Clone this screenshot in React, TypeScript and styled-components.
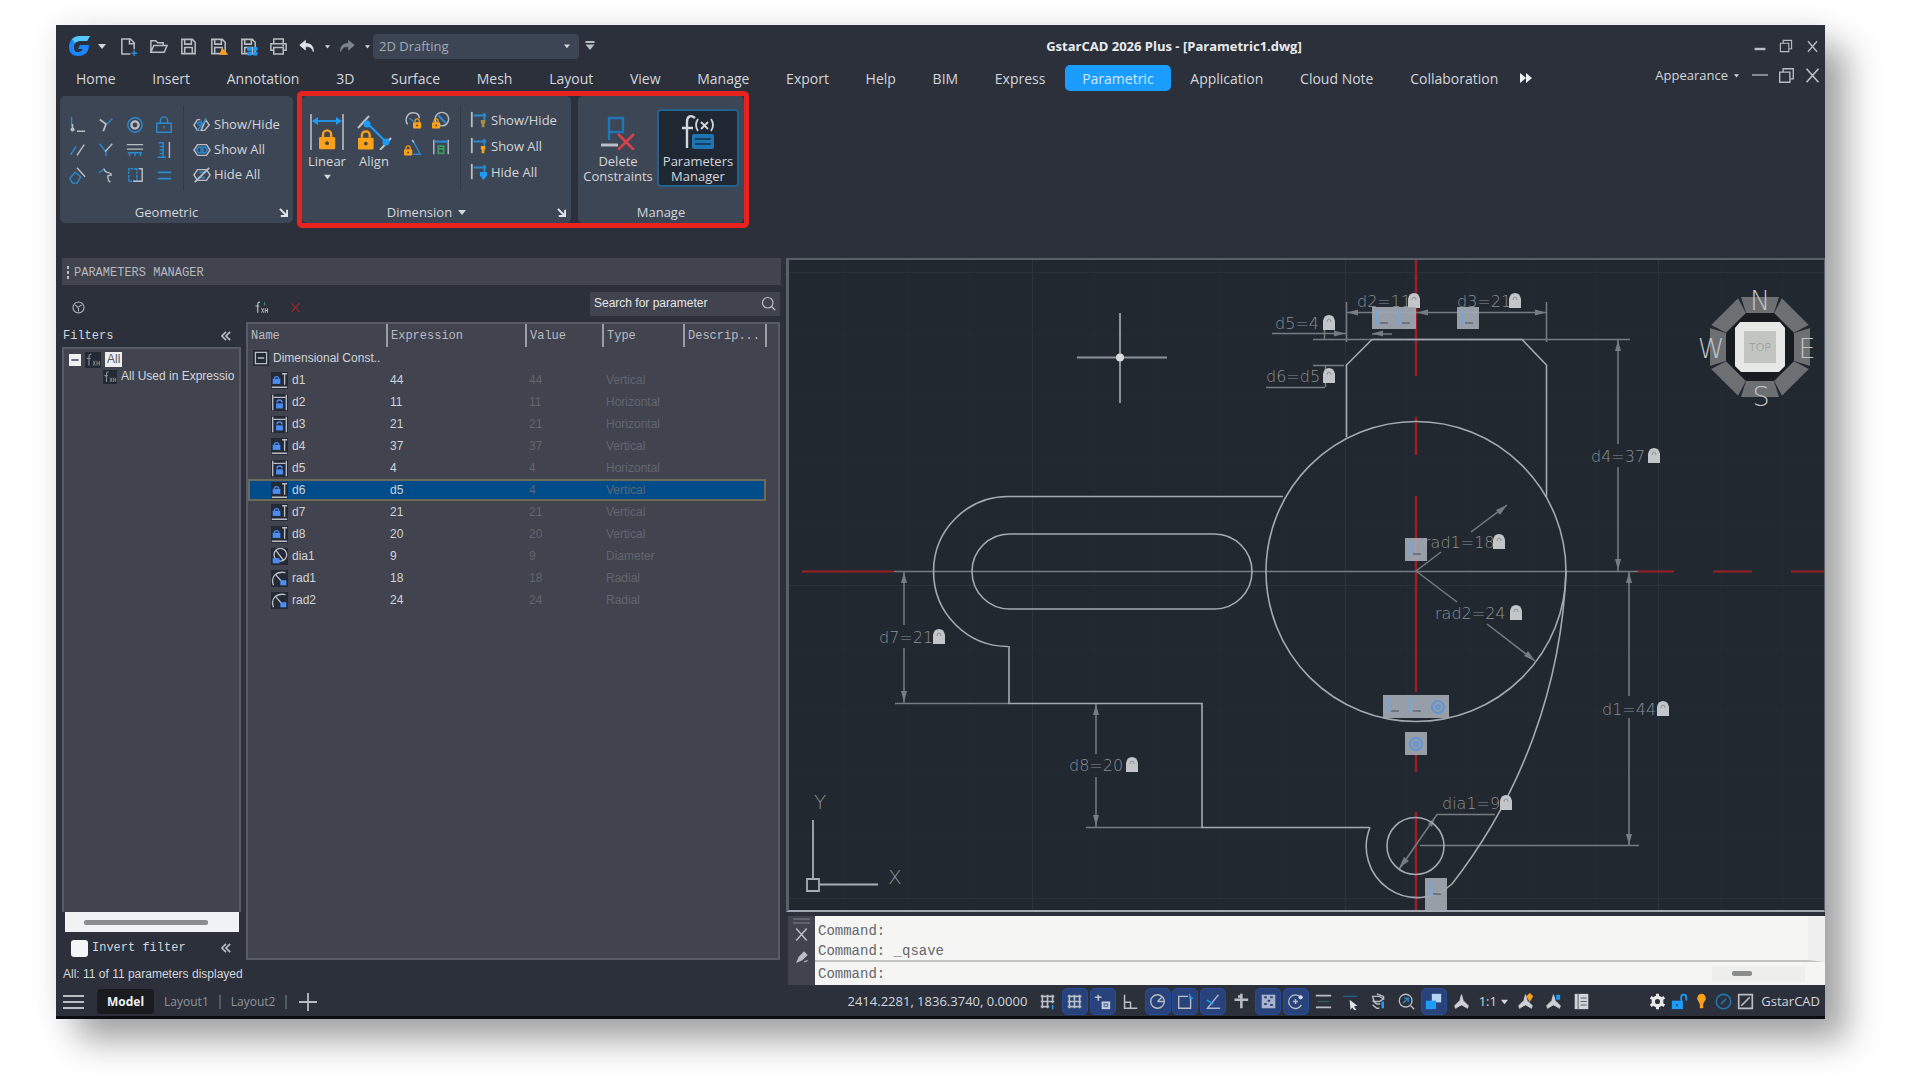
import React from 'react';
import styled, { createGlobalStyle, css } from 'styled-components';

const UI = '"Open Sans", "Noto Sans", sans-serif';
const GRID = '"Liberation Sans", Arial, sans-serif';
const MONO = '"Liberation Mono", "Courier New", monospace';

const LINE = '#b9bdc4';
const BLUE = '#2a8ad0';
const BRIGHT = '#1d9bf5';
const ORANGE = '#f9a11b';
const RED = '#d8404a';

const GlobalStyle = createGlobalStyle`
  * { box-sizing: border-box; }
  body { margin: 0; background: #fff; font-family: ${UI}; }
  button, input, select { font: inherit; color: inherit; margin: 0; }
  button { background: none; border: 0; padding: 0; }
  svg { display: block; flex: none; }
`;

const Page = styled.div`
  min-height: 100vh;
  padding: 25px 95px 61px 56px;
`;

const Window = styled.div`
  display: flex;
  flex-direction: column;
  height: calc(100vh - 86px);
  min-height: 760px;
  background: #2b303b;
  border-bottom: 3px solid #0b0d11;
  color: #d3d6db;
  font-size: 13px;
  line-height: 15px;
  box-shadow: 22px 22px 32px rgba(0, 0, 0, 0.34), 0 0 30px rgba(0, 0, 0, 0.08);
`;

const TitleBar = styled.header`
  display: flex;
  align-items: center;
  height: 40px;
  padding: 2px 0 0 12px;
`;

const IconButton = styled.button<{ $w?: number; $h?: number }>`
  display: flex;
  align-items: center;
  justify-content: center;
  width: ${p => p.$w ?? 30}px;
  height: ${p => p.$h ?? 25}px;
  flex: none;
`;

const Workspace = styled.div`
  display: grid;
  width: 206px;
  height: 25px;
`;

const WorkspaceSelect = styled.select`
  grid-area: 1 / 1;
  appearance: none;
  border: 0;
  border-radius: 4px;
  background: #3c4554;
  color: #a4abb5;
  padding: 0 6px;
  font-size: 13px;
`;

const SelectArrow = styled.span`
  grid-area: 1 / 1;
  justify-self: end;
  align-self: center;
  padding-right: 9px;
  pointer-events: none;
`;

const WindowTitle = styled.h1`
  flex: 1;
  margin: 0;
  text-align: center;
  font-size: 13px;
  line-height: 16px;
  font-weight: 700;
  color: #e9ebee;
`;

const TabRow = styled.nav`
  display: flex;
  justify-content: space-between;
  height: 26px;
  padding-left: 3px;
`;

const TabStrip = styled.div`
  display: flex;
  flex: 0 1 1475px;
  justify-content: space-between;
`;

const Tab = styled.button<{ $active?: boolean }>`
  height: 26px;
  padding: 2px 17px 0;
  border-radius: 5px;
  font-size: 14px;
  line-height: 20px;
  white-space: nowrap;
  ${p => p.$active && css`background: #1b9cff; color: #cfe9ff;`}
`;

const TabTools = styled.div`
  display: flex;
  align-items: center;
  height: 20px;
`;

const Appearance = styled.button`
  display: flex;
  align-items: center;
  gap: 6px;
  padding-right: 8px;
`;

const Ribbon = styled.div`
  display: flex;
  align-items: center;
  gap: 4px;
  padding: 0 4px 30px;
`;

const Highlight = styled.div`
  display: flex;
  gap: 7px;
  border: 5px solid #e8231f;
  border-radius: 5px;
`;

const Panel = styled.section<{ $w: number }>`
  display: flex;
  flex-direction: column;
  width: ${p => p.$w}px;
  height: 127px;
  border-radius: 5px;
  background: #3d4655;
`;

const PanelBody = styled.div<{ $left: number }>`
  display: flex;
  flex: 1;
  padding-left: ${p => p.$left}px;
`;

const PanelFooter = styled.footer`
  display: flex;
  align-items: center;
  height: 22px;
`;

const FooterTitle = styled.span`
  flex: 1;
  display: flex;
  align-items: center;
  justify-content: center;
  gap: 6px;
`;

const ToolGrid = styled.div<{ $cols: number; $cw: number; $rh: number; $top: number }>`
  display: grid;
  grid-template-columns: repeat(${p => p.$cols}, ${p => p.$cw}px);
  grid-auto-rows: ${p => p.$rh}px;
  padding-top: ${p => p.$top}px;
`;

const PanelRule = styled.i`
  width: 1px;
  height: 84px;
  margin: 10px 9px 0 5px;
  background: #313a47;
`;

const ToolList = styled.div<{ $rh: number; $top: number }>`
  display: grid;
  grid-auto-rows: ${p => p.$rh}px;
  padding-top: ${p => p.$top}px;
`;

const ListTool = styled.button`
  display: flex;
  align-items: center;
  gap: 3px;
  white-space: nowrap;
`;

const BigTool = styled.button<{ $w: number; $active?: boolean }>`
  display: flex;
  flex-direction: column;
  align-items: center;
  gap: 4px;
  width: ${p => p.$w}px;
  height: 78px;
  margin-top: 13px;
  padding-top: 3px;
  border-radius: 4px;
  border: 2px solid transparent;
  ${p => p.$active && css`background: #1f2733; border-color: #23618f;`}
`;

const BigLabel = styled.span`
  white-space: pre-line;
  text-align: center;
`;

const Main = styled.main`
  display: grid;
  grid-template-columns: 730px minmax(0, 1fr);
  flex: 1;
  min-height: 0;
`;

const Dock = styled.aside`
  display: flex;
  flex-direction: column;
  padding: 0 5px 0 6px;
  font-family: ${GRID};
  font-size: 12px;
  min-height: 0;
`;

const DockTitle = styled.h2`
  display: flex;
  align-items: center;
  gap: 3px;
  height: 27px;
  margin: 0;
  padding: 2px 0 0 5px;
  background: #41434e;
  font: 400 12px/16px ${MONO};
  color: #b6b9bf;
`;

const DockTools = styled.div`
  display: flex;
  align-items: center;
  height: 37px;
  padding: 8px 0 0 1px;
`;

const ToolSpacer = styled.span<{ $w: number }>`
  width: ${p => p.$w}px;
`;

const Search = styled.label`
  display: flex;
  align-items: center;
  width: 190px;
  height: 24px;
  margin: 0 1px 8px auto;
  padding: 0 4px;
  background: #41434e;
  color: #d3d6db;
`;

const SearchInput = styled.input`
  flex: 1;
  min-width: 0;
  padding: 0;
  border: 0;
  background: none;
  font-weight: 400;
  &::placeholder { color: #e4e6e9; opacity: 1; }
`;

const DockBody = styled.div`
  display: grid;
  grid-template-columns: 179px minmax(0, 1fr);
  gap: 5px;
  flex: 1;
  min-height: 0;
  padding-right: 1px;
`;

const FilterColumn = styled.div`
  display: flex;
  flex-direction: column;
`;

const FilterHead = styled.div`
  display: flex;
  align-items: center;
  justify-content: space-between;
  height: 25px;
  padding: 2px 8px 0 1px;
  font: 400 12px/16px ${MONO};
`;

const Tree = styled.ul`
  flex: 1;
  margin: 0;
  padding: 2px 0 0;
  list-style: none;
  background: #41434e;
  border: 2px solid #575b68;
  border-bottom: 0;
  overflow: hidden;
`;

const TreeItem = styled.li<{ $depth: number }>`
  display: flex;
  align-items: center;
  gap: 4px;
  height: 17px;
  padding-left: ${p => 5 + p.$depth * 34}px;
  white-space: nowrap;
`;

const Selected = styled.span`
  padding: 0 2px;
  background: #eceef0;
  color: #555962;
`;

const TreeScroll = styled.div`
  height: 20px;
  margin: 0 2px 0 3px;
  padding: 8px 31px 0 19px;
  background: #f0f2f3;
`;

const ScrollThumb = styled.i<{ $w?: string }>`
  display: block;
  width: ${p => p.$w ?? '100%'};
  height: 5px;
  border-radius: 2px;
  background: #8b8c8e;
`;

const InvertRow = styled.div`
  display: flex;
  align-items: center;
  justify-content: space-between;
  height: 28px;
  padding: 4px 8px 0 9px;
  font: 400 12px/16px ${MONO};
`;

const CheckLabel = styled.label`
  display: flex;
  align-items: center;
  gap: 4px;
`;

const CheckBox = styled.input`
  appearance: none;
  width: 17px;
  height: 17px;
  border-radius: 3px;
  background: #f4f5f6;
`;

const TablePane = styled.div`
  background: #41434e;
  border: 2px solid #575b68;
  overflow: hidden;
`;

const ParamTable = styled.table`
  width: 518px;
  table-layout: fixed;
  border-collapse: collapse;
  text-align: left;
`;

const HeadCell = styled.th<{ $w: number }>`
  width: ${p => p.$w}px;
  height: 23px;
  padding: 0 0 0 3px;
  border-right: 2px solid #9a9da5;
  font: 400 12px/16px ${MONO};
  color: #b9bcc2;
`;

const Row = styled.tr<{ $selected?: boolean }>`
  height: 22px;
  ${p => p.$selected && css`
    background: #004b8a;
    outline: 2px solid #6d6a55;
    outline-offset: -2px;
  `}
`;

const Cell = styled.td<{ $dim?: boolean }>`
  height: 22px;
  padding: 0 0 0 3px;
  color: ${p => (p.$dim ? '#62666e' : '#d0d3d8')};
  white-space: nowrap;
`;

const NameCell = styled.div<{ $indent: number }>`
  display: flex;
  align-items: center;
  gap: 4px;
  padding-left: ${p => p.$indent}px;
`;

const DockStatus = styled.p`
  margin: 0;
  height: 25px;
  padding: 7px 0 0 1px;
  font-size: 12px;
`;

const DrawingColumn = styled.div`
  display: flex;
  flex-direction: column;
  gap: 4px;
  min-height: 0;
`;

const Canvas = styled.div`
  display: flex;
  flex: 1 1 0;
  min-height: 0;
  overflow: hidden;
  background: #212830;
  border: solid #5a5f6a;
  border-width: 2px 1px 2px 3px;
  border-bottom-color: #a4a7b4;
`;

const Drawing = styled.svg`
  flex: 1;
  min-width: 0;
`;

const CommandArea = styled.div`
  display: grid;
  grid-template-columns: 27px minmax(0, 1fr);
  height: 69px;
  padding-left: 2px;
`;

const CommandGrip = styled.div`
  display: flex;
  flex-direction: column;
  align-items: center;
  gap: 1px;
  padding-top: 2px;
  background: #41434e;
`;

const CommandText = styled.div`
  display: flex;
  flex-direction: column;
  background: #f5f5f4;
  color: #64666a;
  font: 400 14px/20px ${MONO};
`;

const History = styled.pre`
  margin: 0;
  height: 46px;
  padding: 5px 0 0 3px;
  border-right: 17px solid #efefef;
  border-bottom: 2px solid #c3c4c5;
  font: inherit;
`;

const Prompt = styled.label`
  display: flex;
  align-items: center;
  flex: 1;
  padding-left: 3px;
`;

const PromptInput = styled.input`
  flex: 1;
  border: 0;
  padding: 0 8px;
  background: none;
`;

const PromptScroll = styled.span`
  width: 93px;
  height: 16px;
  margin-right: 20px;
  padding: 5px 0 0 20px;
  background: #eeeeed;
`;

const StatusBar = styled.footer`
  display: flex;
  align-items: center;
  justify-content: space-between;
  height: 31px;
  padding: 2px 5px 0 5px;
`;

const Group = styled.div`
  display: flex;
  align-items: center;
`;

const LayoutTab = styled.button<{ $active?: boolean }>`
  height: 25px;
  padding: 0 10px;
  border-radius: 4px;
  font-size: 12px;
  color: #8f949c;
  ${p => p.$active && css`background: #191b1e; color: #f0f1f2; font-weight: 700;`}
`;

const Divider = styled.i`
  width: 2px;
  height: 14px;
  background: #545a64;
`;

const Coordinates = styled.output`
  margin-right: 5px;
`;

const StatusToggle = styled.button<{ $on?: boolean; $w?: number }>`
  display: flex;
  align-items: center;
  justify-content: center;
  gap: 4px;
  width: ${p => p.$w ?? 26}px;
  height: 27px;
  border-radius: 5px;
  ${p => p.$on && css`background: #28437c; border: 1px solid #284b98;`}
`;

const StatusGroup = styled(Group)`
  gap: 2px;
`;

const ToggleStrip = styled(Group)`
  justify-content: space-between;
  width: 440px;
`;

const Caret = ({ s = 7, c = '#d3d6db' }: { s?: number; c?: string }) => (
  <svg width={s} height={s} viewBox="0 0 8 8"><path d="M0 2h8L4 7z" fill={c} /></svg>
);

const Icon = ({ s = 20, w, children }: { s?: number; w?: number; children: React.ReactNode }) => (
  <svg width={w ?? s} height={s} viewBox={`0 0 ${w ? (w / s) * 20 : 20} 20`} fill="none" stroke={LINE} strokeWidth="1.6">
    {children}
  </svg>
);

const padlock = (x: number, y: number, s: number, c = ORANGE) => (
  <g transform={`translate(${x} ${y}) scale(${s})`}>
    <path d="M3 6V4a3 3 0 0 1 6 0v2" stroke={c} strokeWidth="1.8" fill="none" />
    <rect x="0" y="6" width="12" height="9" rx="1" fill={c} stroke="none" />
    <circle cx="6" cy="10.500" r="1.400" fill="#4a4130" stroke="none" />
  </g>
);

const floppy = <path d="M3 2.500h11l3 3v12H3zM6 2.500v5h7v-5M6 17v-6h8v6" />;

const quickTools: [string, React.ReactNode][] = [
  ['New', <><path d="M12 18H3V2h9l4 4v7M11 2v5h5" /><path d="M16 14v6M13 17h6" stroke={BLUE} /></>],
  ['Open', <path d="M2 16V4h5l2 2h6v3M2 16l3-7h14l-3 7z" />],
  ['Save', floppy],
  ['Save As', <>{floppy}<path d="M12 18l2-5 5 5z" fill={ORANGE} stroke={ORANGE} /></>],
  ['Save All', <>{floppy}<path d="M9 11h4v3H9zM15 11h4v3h-4zM9 16h4v3H9zM15 16h4v3h-4z" fill={BRIGHT} stroke={BRIGHT} strokeWidth="1" /></>],
  ['Print', <path d="M5 7V2h10v5M5 14H2V7h16v7h-3M5 11h10v7H5zM14 9h2" />],
];

const undoPath = 'M8 3L1 9l7 6v-4c5-1 8 1 10 6 0-8-4-10-10-10z';

const tabs = ['Home', 'Insert', 'Annotation', '3D', 'Surface', 'Mesh', 'Layout', 'View', 'Manage', 'Export', 'Help', 'BIM', 'Express', 'Parametric', 'Application', 'Cloud Note', 'Collaboration'];

const geometricTools: [string, React.ReactNode][] = [
  ['Coincident', <><path d="M4 1v11" stroke={BLUE} /><path d="M5 9v7h2M10 17h9" /><circle cx="5" cy="15" r="2.200" fill={LINE} stroke="none" /></>],
  ['Perpendicular', <><path d="M3 4l7 5-3 8" strokeWidth="2" /><path d="M11 9l6-6" stroke={BLUE} /></>],
  ['Concentric', <><circle cx="10" cy="10" r="8" stroke={BLUE} /><circle cx="10" cy="10" r="4" strokeWidth="2.600" /></>],
  ['Fix', <><path d="M6 8V5a4 4 0 0 1 8 0v3M2 8h16v10H2zM10 11v3" stroke={BLUE} /></>],
  ['Parallel', <><path d="M3 15L9 6" stroke={BLUE} /><path d="M10 16l8-12" /></>],
  ['Angle', <><path d="M3 3l6 8M10 17V12" stroke={BLUE} /><path d="M9 12l8-9" /></>],
  ['Horizontal', <><path d="M1 4h18M1 9h18" /><path d="M2 13h16M4 13v4M10 13v4M16 13v4" stroke={BLUE} /></>],
  ['Vertical', <><path d="M4 2h5v16M5 6h4M5 10h4M5 14h4M3 18h9" stroke={BLUE} /><path d="M16 1v18" /></>],
  ['Tangent', <><path d="M10 2l9 10" /><path d="M8 7l6 5-4 7H5l-3-5z" stroke={BLUE} /></>],
  ['Smooth', <><path d="M2 7c5 0 4-4 6-4" stroke={BLUE} /><path d="M8 3c0 6 8 3 8 7l-4 1c0 5 1 6 3 7" /></>],
  ['Symmetric', <><path d="M12 3H3v14h9z" stroke={BLUE} strokeDasharray="3 1" /><path d="M14 3h4v14h-4M8 17h6" /></>],
  ['Equal', <path d="M3 7h15M3 14h15" stroke={BLUE} strokeWidth="2" />],
];

const showTools = ['Show/Hide', 'Show All', 'Hide All'];

const geoShow = [
  <><path d="M8 4H5L1 10l4 6h2M14 4l4 6-5 6H9z" /><path d="M4 17L15 3M5 8l4-2v6z" stroke={BLUE} /></>,
  <><path d="M5 4h10l4 6-4 6H5l-4-6z" /><path d="M6 7h3v6H6l-2-3zM11 7h3l2 3-2 3h-3z" stroke={BLUE} /></>,
  <><path d="M5 4h10l4 6-4 6H5l-4-6z" /><path d="M7 7h7M6 13h7" stroke={BLUE} strokeWidth="2" /><path d="M2 18L18 2" strokeWidth="2" /></>,
];

const dimShow = [BLUE, ORANGE, BRIGHT].map((c, i) => (
  <React.Fragment key={c}>
    <path d="M2 1v17" strokeWidth="2" />
    <path d="M4 5h14M16 2v8" stroke={BLUE} strokeWidth="2" />
    <path d={i === 2 ? 'M11 10h8v4l-4 5-4-5z' : 'M12 10h5v4h-1v4h-3v-4h-1z'} fill={i === 0 ? '#a98b45' : c} stroke="none" />
  </React.Fragment>
));

const dimTools: [string, React.ReactNode][] = [
  ['Radial', <><path d="M4 15C0 9 4 2 10 2c4 0 7 2 7 6" /><path d="M6 8l5 4" stroke={BLUE} />{padlock(10, 8, 0.76)}</>],
  ['Diameter', <><circle cx="11" cy="9" r="7.500" /><path d="M7 5l8 8" stroke={BLUE} strokeWidth="2.400" />{padlock(0, 8, 0.76)}</>],
  ['Angular', <><path d="M10 3l8 15H10" stroke={BLUE} /><path d="M9 2l2 3" />{padlock(0, 8, 0.76)}</>],
  ['Convert', <><path d="M2 2v16M18 2v16" /><path d="M3 4h14" stroke={BLUE} strokeWidth="2.400" /><path d="M7 9h6v8H7zM8 12h4" stroke="#3a9a62" strokeWidth="2" /></>],
];

const vertIcon = <><path d="M1 18h18M16 2v13M13 2h6" /><path d="M4 8a2 2 0 0 1 5 0" stroke="#4b8df5" /><path d="M2 8h9v6H2z" fill="#4b8df5" stroke="none" /></>;
const horzIcon = <><path d="M2 1v18M18 1v18M3 4h14" /><path d="M7 10a3 3 0 0 1 6 0" stroke="#4b8df5" /><path d="M6 11h8v6H6z" fill="#4b8df5" stroke="none" /></>;
const diaIcon = <><circle cx="11" cy="8" r="7.500" /><path d="M6 3l9 12" /><path d="M2 12h8v6H2z" fill="#4b8df5" stroke="none" /></>;
const radIcon = <><path d="M3 18C-1 8 6 1 17 3M6 6l6 7" /><path d="M11 12h7v6h-7z" fill="#4b8df5" stroke="none" /></>;

const kinds = {
  Vertical: vertIcon,
  Horizontal: horzIcon,
  Diameter: diaIcon,
  Radial: radIcon,
};

const params: [string, string, string, keyof typeof kinds][] = [
  ['d1', '44', '44', 'Vertical'],
  ['d2', '11', '11', 'Horizontal'],
  ['d3', '21', '21', 'Horizontal'],
  ['d4', '37', '37', 'Vertical'],
  ['d5', '4', '4', 'Horizontal'],
  ['d6', 'd5', '4', 'Vertical'],
  ['d7', '21', '21', 'Vertical'],
  ['d8', '20', '20', 'Vertical'],
  ['dia1', '9', '9', 'Diameter'],
  ['rad1', '18', '18', 'Radial'],
  ['rad2', '24', '24', 'Radial'],
];

const darkTile = <rect width="20" height="20" fill="#242a35" stroke="none" />;
const fxGlyph = <><path d="M8 3C4 2 5 6 5 17M2 8h5" /><path d="M10 11l3 6M13 11l-3 6M15 11v6M18 11v6M15 14h3" strokeWidth="1.200" /></>;

const Chevrons = () => (
  <svg width="10" height="10" viewBox="0 0 12 12" fill="none" stroke={LINE} strokeWidth="2">
    <path d="M6 1L1 6l5 5M11 1L6 6l5 5" />
  </svg>
);

const Launcher = () => (
  <svg width="9" height="9" viewBox="0 0 10 10" fill="none" stroke="#dfe2e6" strokeWidth="2.200">
    <path d="M1 1l7 7M9 2v7H2" />
  </svg>
);

const Restore = ({ s }: { s: number }) => (
  <Icon s={s}><path d="M2 6h12v12H2zM6 6V2h12v12h-4" /></Icon>
);
const Cross = ({ s, c = LINE }: { s: number; c?: string }) => (
  <Icon s={s}><path d="M3 2l14 16M17 2L3 18" stroke={c} strokeWidth="2" /></Icon>
);

const person = <path d="M10 2l2 7 6 6-1 3-5-3-2-1-2 1-5 3-1-3 6-6z" fill="#cdd0d5" stroke="#cdd0d5" strokeWidth="1" />;

const statusTools: [string, boolean, React.ReactNode][] = [
  ['Grid', false, <><path d="M4 2v16M10 2v16M16 2v10M2 4h16M2 10h16M2 16h10" strokeWidth="2" /><path d="M16 14v5" stroke={BRIGHT} strokeWidth="2" /></>],
  ['Snap', true, <path d="M4 2v16M10 2v16M16 2v16M2 4h16M2 10h16M2 16h16" strokeWidth="2" />],
  ['Infer', true, <><path d="M5 2v7M1 5h8" strokeWidth="2" /><path d="M9 10h10v9H9z" fill="#c4cbdc" stroke="none" /><path d="M12 13h4v3h-4z" stroke="#6177a8" /></>],
  ['Ortho', false, <path d="M3 2v16h15M3 11h7v7" strokeWidth="1.800" />],
  ['Polar', true, <><circle cx="10" cy="10" r="8" /><path d="M10 10h8M10 10l5-5" /></>],
  ['Osnap', true, <><path d="M16 4v14H2V4h11" /><path d="M15 1v5h4" stroke={BRIGHT} /></>],
  ['Tracking', true, <><path d="M17 2L4 18h15" stroke="#a9b6d3" /><path d="M3 8l8 5" stroke={BRIGHT} /></>],
  ['Dynamic UCS', false, <path d="M11 1v17M3 8h16M7 4h4" strokeWidth="3" />],
  ['Hatch', true, <><rect x="2" y="2" width="16" height="16" fill="#a9b3cb" stroke="none" /><path d="M5 5h3M12 5h3M9 9h3M5 13h3M12 14h3" stroke="#29427a" strokeWidth="2.400" /></>],
  ['Cycle', true, <><path d="M16 5a8 8 0 1 0 1 9" /><path d="M10 7v6M7 10h6" /><circle cx="16" cy="5" r="2.500" fill="#d5dbe8" stroke="none" /></>],
  ['Lineweight', false, <><path d="M1 3h18M1 17h18" strokeWidth="2" /><path d="M3 10h14" stroke="#365c62" /></>],
  ['Selection', false, <><path d="M1 4h17" stroke="#285f86" /><path d="M9 8l9 7-4 1 3 4-2 1-3-4-2 3z" fill="#dfe2e6" stroke="none" /></>],
  ['Isolate', false, <><path d="M3 4h8l5 3-5 3H5zM3 9l5 4h4M3 14l5 4h3M8 1l8 3v4" /><path d="M15 10v8" stroke={BRIGHT} strokeWidth="3" /></>],
  ['Zoom', false, <><circle cx="9" cy="9" r="7.500" /><path d="M15 15l4 4" /><path d="M7 6h5v5M6 12l6-6" stroke={BLUE} /></>],
  ['Units', true, <><rect x="8" y="1" width="11" height="10" fill="#b7d6f5" stroke="none" /><rect x="1" y="9" width="12" height="10" fill={BRIGHT} stroke="none" /></>],
  ['Annotation Scale', false, person],
];

const statusMore: [string, React.ReactNode][] = [
  ['Annotation Visibility', <>{person}<path d="M15 1l3 3-3 5-3-5z" fill={ORANGE} stroke={ORANGE} /></>],
  ['Auto Scale', <>{person}<path d="M14 3h3v4h-3z" fill={BRIGHT} stroke={BRIGHT} /></>],
  ['Properties', <><rect x="2" y="1" width="16" height="18" fill="#d0d3d8" stroke="none" /><path d="M6 1v18M9 6h7M9 10h7M9 14h7" stroke="#5b626d" strokeWidth="1.200" /></>],
];

const statusEnd: [string, React.ReactNode][] = [
  ['Settings', <><circle cx="10" cy="10" r="5" strokeWidth="4" stroke="#e6e8ea" /><path d="M10 1v3M10 16v3M2 5l3 2M15 13l3 2M2 15l3-2M15 7l3-2" strokeWidth="3.500" stroke="#e6e8ea" /></>],
  ['Lock UI', <><rect x="1" y="9" width="13" height="10" fill={BRIGHT} stroke="none" /><path d="M12 9V5a3 3 0 0 1 6 0v4" stroke={BRIGHT} strokeWidth="2" /><path d="M7 13v3" stroke="#14518a" /></>],
  ['Tips', <path d="M10 1a5 5 0 0 0-4 8l2 4v5h4v-5l2-4a5 5 0 0 0-4-8z" fill={ORANGE} stroke="none" />],
  ['Performance', <><circle cx="10" cy="10" r="8.500" stroke="#2171ad" strokeWidth="2" /><path d="M7 13l6-6" stroke="#2171ad" strokeWidth="2" /></>],
  ['Clean Screen', <path d="M2 2h16v16H2zM5 15L15 5" strokeWidth="2" />],
];

const gridMajorX = [1032, 1345, 1658];
const gridMajorY = [272, 585, 898];
const gridMinorX = Array.from({ length: 17 }, (_, i) => 844 + Math.round(i * 62.6));
const gridMinorY = Array.from({ length: 11 }, (_, i) => 272 + Math.round(i * 62.6));

const dimLabels: [string, number, number, number][] = [
  ['d2=11', 1357, 307, 1408],
  ['d3=21', 1457, 307, 1509],
  ['d5=4', 1275, 329, 1323],
  ['d6=d5', 1266, 382, 1323],
  ['d4=37', 1591, 462, 1648],
  ['rad1=18', 1424, 548, 1493],
  ['rad2=24', 1435, 619, 1510],
  ['d1=44', 1602, 715, 1657],
  ['d7=21', 879, 643, 933],
  ['d8=20', 1069, 771, 1126],
  ['dia1=9', 1442, 809, 1500],
];

/* each letter is one constraint glyph in the bar: c = coincident, t = concentric */
const markers: [number, number, number, string][] = [
  [1372, 307, 22, 'cc'],
  [1457, 307, 22, 'c'],
  [1405, 538, 23, 'c'],
  [1383, 695, 23, 'cct'],
  [1405, 732, 23, 't'],
  [1425, 878, 32, 'c'],
];

const arrowsV: [number, number, number][] = [
  [1618, 340, 1], [1618, 570, -1], [1629, 572, 1], [1629, 845, -1],
  [904, 572, 1], [904, 702, -1], [1096, 704, 1], [1096, 826, -1],
];

const compass = Array.from({ length: 8 }, (_, i) => i * 45);

const CadDrawing = () => (
  <Drawing viewBox="789 260 1035 650" preserveAspectRatio="xMidYMid slice" fill="none" role="img" aria-label="Parametric1 drawing">
    <g stroke="#222b33">
      {gridMinorX.map(x => <path key={x} d={`M${x}.5 260v650`} />)}
      {gridMinorY.map(y => <path key={y} d={`M789 ${y}.5h1035`} />)}
    </g>
    <g stroke="#28343c">
      {gridMajorX.map(x => <path key={x} d={`M${x}.5 260v650`} />)}
      {gridMajorY.map(y => <path key={y} d={`M789 ${y}.5h1035`} />)}
    </g>
    <g stroke="#9c1f26" strokeWidth="2">
      <path d="M802 571.5h92M1638 571.5h36M1713 571.5h39M1791 571.5h33" />
      <path d="M1416 260v116M1416 417v38M1416 496v196M1416 753v19M1416 812v98" strokeWidth="2.500" />
    </g>
    <g stroke="#777c83" strokeWidth="1.500">
      <path d="M894 571.500h744M1313 339.500h317M1347 312.500h199M1346.500 302v40M1546.500 302v40M1313 365.500h31" />
      <path d="M1272 333.500h75M1324.500 326v13M1372 334h20M1266 387.500h59M1325.500 366v21" />
      <path d="M1618 340v104M1618 467v104M1629 571v125M1629 718v127M1420 845.500h219" />
      <path d="M904 571v54M904 648v55M895 703.500h114M1096 703v51M1096 777v50M1086 827.500h116" />
      <path d="M1416 571l25-19M1471 532l36-27M1416 571l41 31M1487 624l48 37" />
      <path d="M1495 814.500h-58l-38 55" />
    </g>
    <g fill="#777c83">
      {arrowsV.map(([x, y, d]) => <path key={`${x}-${y}`} d={`M${x} ${y}l3 ${d * 11}h-6z`} />)}
      <path d="M1507 505l-11 5 4 5zM1535 661l-11-5 4-5zM1347 312.500l11-3v6zM1546 312.500l-11-3v6zM1417 312.500l11-3v6zM1345 333.500l-11-3v6zM1372 333.500l11-3v6zM1399 868l5-11 5 4zM1435 817l-3 10-4-3z" />
    </g>
    <g stroke="#a6aab0" strokeWidth="1.600">
      <path d="M1283 496.500H1008A74.500 75 0 0 0 1008 646.500M1009 646v57.500h193V827.500h168" />
      <rect x="972" y="534" width="280" height="75" rx="37.500" />
      <circle cx="1416" cy="571.500" r="150" />
      <circle cx="1415.500" cy="846" r="28.500" />
      <path d="M1346.500 437V365L1372 339.500h150L1546.500 365V497" />
      <path d="M1370 827.500A51 51 0 0 0 1452 884A543 543 0 0 0 1566 571" />
    </g>
    <path d="M1077 357.500h90M1120 313v90" stroke="#8f9399" strokeWidth="2" />
    <circle cx="1120" cy="357.500" r="4" fill="#d8dadd" />
    <g fill="#8b9096" fontFamily='"DejaVu Sans", sans-serif' fontWeight="200" fontSize="16">
      {dimLabels.map(([t, x, y]) => <text key={t} x={x} y={y}>{t}</text>)}
      <text x="814" y="809" fontSize="20">Y</text>
      <text x="888" y="884" fontSize="20">X</text>
    </g>
    {dimLabels.map(([t, , y, lx]) => (
      <g key={t}>
        <path d={`M${lx} ${y + 1}v-9q1-6 6-6t6 6v9z`} fill="#c3c6c9" />
        <path d={`M${lx + 4} ${y - 7}q0-3 2-3t2 3`} stroke="#8d9196" />
      </g>
    ))}
    {markers.map(([x, y, h, glyphs]) => (
      <g key={`${x}-${y}`}>
        <rect x={x} y={y} width={glyphs.length * 22} height={h} fill="#a3a8b3" opacity="0.92" />
        {glyphs.split('').map((g, i) => (g === 'c' ? (
          <g key={i}>
            <path d={`M${x + i * 22 + 5} ${y + 3}v15`} stroke="#74a7dd" strokeWidth="2" />
            <path d={`M${x + i * 22 + 8} ${y + 16}h8`} stroke="#6f747f" strokeWidth="2" />
          </g>
        ) : (
          <g key={i} stroke="#5f95d6" strokeWidth="2">
            <circle cx={x + i * 22 + 11} cy={y + 12} r="6" />
            <circle cx={x + i * 22 + 11} cy={y + 12} r="2" />
          </g>
        )))}
      </g>
    ))}
    <g stroke="#a9adb3" strokeWidth="1.800">
      <path d="M813 820v58M819 884.500h59M807 879h12v12h-12z" />
    </g>
    <g transform="translate(1760 347)">
      <circle r="40" fill="#181c21" />
      {compass.map(a => (
        <path key={a} d="M-19 -50H19L14 -34H-14z" fill="#6c7073" transform={`rotate(${a})`} />
      ))}
      <path d="M-20 -25H20L25 -19V19L19 25H-19L-25 19V-19z" fill="#e6e8e5" />
      <path d="M-16 -16h32v32h-32z" fill="#c3c5c1" />
    </g>
    <g fontFamily='"DejaVu Sans", sans-serif' fontWeight="200" textAnchor="middle">
      <text x="1760" y="351" fontSize="11" fill="#8d908d">TOP</text>
      <g fontSize="27" fill="#c0c3c6">
        <text x="1760" y="310">N</text>
        <text x="1761" y="406">S</text>
        <text x="1711" y="358">W</text>
        <text x="1807" y="358">E</text>
      </g>
    </g>
  </Drawing>
);

const ParametersTable = () => (
  <ParamTable>
    <thead>
      <tr>
        <HeadCell $w={139}>Name</HeadCell>
        <HeadCell $w={139}>Expression</HeadCell>
        <HeadCell $w={77}>Value</HeadCell>
        <HeadCell $w={81}>Type</HeadCell>
        <HeadCell $w={82}>Descrip...</HeadCell>
      </tr>
    </thead>
    <tbody>
      <Row>
        <Cell colSpan={5}>
          <NameCell $indent={2}>
            <Icon s={16}>{darkTile}<path d="M3 3h14v14H3zM6 10h8" /></Icon>
            Dimensional Const..
          </NameCell>
        </Cell>
      </Row>
      {params.map(([name, expr, value, type]) => (
        <Row key={name} $selected={name === 'd6'}>
          <Cell>
            <NameCell $indent={20}>
              <Icon s={17}>{darkTile}{kinds[type]}</Icon>
              {name}
            </NameCell>
          </Cell>
          <Cell>{expr}</Cell>
          <Cell $dim>{value}</Cell>
          <Cell $dim>{type}</Cell>
          <Cell />
        </Row>
      ))}
    </tbody>
  </ParamTable>
);

const RibbonArea = () => (
  <Ribbon>
    <Panel $w={233}>
      <PanelBody $left={2}>
        <ToolGrid $cols={4} $cw={29} $rh={25} $top={16}>
          {geometricTools.map(([name, glyph]) => (
            <IconButton key={name} $w={29} aria-label={name}><Icon s={18}>{glyph}</Icon></IconButton>
          ))}
        </ToolGrid>
        <PanelRule />
        <ToolList $rh={25} $top={16}>
          {showTools.map((t, i) => (
            <ListTool key={t}><Icon s={18}>{geoShow[i]}</Icon>{t}</ListTool>
          ))}
        </ToolList>
      </PanelBody>
      <PanelFooter>
        <FooterTitle>Geometric</FooterTitle>
        <IconButton $w={20} $h={20} aria-label="Geometric settings"><Launcher /></IconButton>
      </PanelFooter>
    </Panel>
    <Highlight>
      <Panel $w={269}>
        <PanelBody $left={3}>
          <BigTool $w={44}>
            <svg width="36" height="36" viewBox="0 0 36 36" fill="none" stroke={LINE} strokeWidth="1.6">
              <path d="M2 0v36M34 0v36" />
              <path d="M5 7h26" stroke={BRIGHT} strokeWidth="1.800" />
              <path d="M3 7l6-4v8zM33 7l-6-4v8z" fill={BRIGHT} stroke="none" />
              {padlock(10, 15, 1.35)}
            </svg>
            <BigLabel>Linear</BigLabel>
            <Caret />
          </BigTool>
          <BigTool $w={50}>
            <svg width="36" height="36" viewBox="0 0 36 36" fill="none" stroke={LINE} strokeWidth="2">
              <path d="M2 14L13 2M24 36l11-12" />
              <path d="M11 9l20 20" stroke={BRIGHT} />
              <circle cx="11" cy="10" r="3.500" fill={BRIGHT} stroke="none" />
              <circle cx="30" cy="28" r="3.500" fill={BRIGHT} stroke="none" />
              {padlock(2, 16, 1.3)}
            </svg>
            <BigLabel>Align</BigLabel>
          </BigTool>
          <ToolGrid $cols={2} $cw={28} $rh={27} $top={11}>
            {dimTools.map(([name, glyph]) => (
              <IconButton key={name} $w={28} aria-label={name}><Icon s={18}>{glyph}</Icon></IconButton>
            ))}
          </ToolGrid>
          <PanelRule />
          <ToolList $rh={26} $top={11}>
            {showTools.map((t, i) => (
              <ListTool key={t}><Icon s={18}>{dimShow[i]}</Icon>{t}</ListTool>
            ))}
          </ToolList>
        </PanelBody>
        <PanelFooter>
          <FooterTitle>Dimension <Caret s={8} /></FooterTitle>
          <IconButton $w={20} $h={20} aria-label="Dimension settings"><Launcher /></IconButton>
        </PanelFooter>
      </Panel>
      <Panel $w={166}>
        <PanelBody $left={1}>
          <BigTool $w={78}>
            <svg width="36" height="36" viewBox="0 0 36 36" fill="none" stroke="#1f77b8" strokeWidth="2.400">
              <path d="M9 26V4h14v14H10" />
              <path d="M1 31h17" stroke={LINE} strokeWidth="3" />
              <path d="M18 20l16 16M34 20L18 36" stroke={RED} strokeWidth="2.600" />
            </svg>
            <BigLabel>{'Delete\nConstraints'}</BigLabel>
          </BigTool>
          <BigTool $w={82} $active>
            <svg width="36" height="36" viewBox="0 0 36 36" fill="none" stroke="#d3d6db" strokeWidth="2">
              <path d="M15 4C10 0 7 3 7 8v26M2 14h11" strokeWidth="2.400" />
              <path d="M18 5q-4 6 0 12M31 5q4 6 0 12M21 8l7 7M28 8l-7 7" strokeWidth="1.800" />
              <rect x="12" y="20" width="22" height="15" rx="2" fill="#1f74b4" stroke="none" />
              <path d="M15 25h16M15 30h16" stroke="#163f63" />
            </svg>
            <BigLabel>{'Parameters\nManager'}</BigLabel>
          </BigTool>
        </PanelBody>
        <PanelFooter><FooterTitle>Manage</FooterTitle></PanelFooter>
      </Panel>
    </Highlight>
  </Ribbon>
);

export default function App() {
  return (
    <Page>
      <GlobalStyle />
      <Window>
        <TitleBar>
          <IconButton $w={23} aria-label="GstarCAD menu">
            <svg width="22" height="22" viewBox="0 0 22 22" fill="none">
              <path d="M21 1H11C4 1 0 6 0 12c0 6 4 9 9 9 7 0 11-4 11-11h-9l-2 4h5c-1 2-3 3-5 3-3 0-4-2-4-5 0-4 3-6 6-6h7z" fill="#1a86ff" />
              <path d="M21 1H11C8 1 5 2 3 4l3 4c1-1 3-2 5-2h7z" fill="#55c8ff" />
            </svg>
          </IconButton>
          <IconButton $w={22} aria-label="Application menu"><Caret s={8} /></IconButton>
          {quickTools.map(([name, glyph]) => (
            <IconButton key={name} aria-label={name}><Icon s={19}>{glyph}</Icon></IconButton>
          ))}
          <IconButton $w={28} aria-label="Undo"><Icon s={16}><path d={undoPath} fill="#dfe2e6" stroke="#dfe2e6" strokeWidth="1" /></Icon></IconButton>
          <IconButton $w={12} aria-label="Undo list"><Caret s={5} /></IconButton>
          <IconButton $w={28} aria-label="Redo"><Icon s={16}><path d={undoPath} fill="#7f858f" stroke="#7f858f" strokeWidth="1" transform="translate(20 0) scale(-1 1)" /></Icon></IconButton>
          <IconButton $w={12} aria-label="Redo list"><Caret s={5} /></IconButton>
          <Workspace>
            <WorkspaceSelect aria-label="Workspace"><option>2D Drafting</option></WorkspaceSelect>
            <SelectArrow><Caret s={6} /></SelectArrow>
          </Workspace>
          <IconButton $w={22} aria-label="Customize toolbar"><Icon s={10}><path d="M1 2h18" strokeWidth="4" /><path d="M1 7h18l-9 11z" fill={LINE} stroke="none" /></Icon></IconButton>
          <WindowTitle>GstarCAD 2026 Plus - [Parametric1.dwg]</WindowTitle>
          <IconButton $w={26} aria-label="Minimize"><Icon s={12}><path d="M1 15h18" strokeWidth="4" /></Icon></IconButton>
          <IconButton $w={26} aria-label="Restore"><Restore s={14} /></IconButton>
          <IconButton $w={26} aria-label="Close"><Cross s={13} /></IconButton>
        </TitleBar>
        <TabRow>
          <TabStrip>
            {tabs.map(t => <Tab key={t} $active={t === 'Parametric'}>{t}</Tab>)}
            <IconButton $w={16} $h={26} aria-label="More tabs">
              <svg width="12" height="10" viewBox="0 0 12 10" fill="#f0f1f3"><path d="M0 0l6 5-6 5zM6 0l6 5-6 5z" /></svg>
            </IconButton>
          </TabStrip>
          <TabTools>
            <Appearance>Appearance <Caret s={5} /></Appearance>
            <IconButton $w={26} aria-label="Minimize drawing"><Icon s={16}><path d="M0 10h20" /></Icon></IconButton>
            <IconButton $w={26} aria-label="Restore drawing"><Restore s={17} /></IconButton>
            <IconButton $w={26} aria-label="Close drawing"><Cross s={17} /></IconButton>
          </TabTools>
        </TabRow>
        <RibbonArea />
        <Main>
          <Dock>
            <DockTitle>
              <svg width="4" height="14" viewBox="0 0 4 14" fill={LINE}><path d="M0 0h2v3H0zM0 5h2v3H0zM0 10h2v3H0z" /></svg>
              PARAMETERS MANAGER
            </DockTitle>
            <DockTools>
              <IconButton aria-label="New filter"><Icon s={13}><circle cx="10" cy="10" r="8.500" /><path d="M5 6l5 5v5M10 9l5-3" /></Icon></IconButton>
              <ToolSpacer $w={155} />
              <IconButton $w={26} aria-label="New parameter"><Icon s={15}>{fxGlyph}<path d="M14 3v4" stroke="#2f9d63" /></Icon></IconButton>
              <IconButton $w={42} aria-label="Delete parameter"><Cross s={11} c="#a5252d" /></IconButton>
              <Search>
                <SearchInput placeholder="Search for parameter" aria-label="Search for parameter" />
                <Icon s={15}><circle cx="9" cy="9" r="7" /><path d="M14 14l5 5" /></Icon>
              </Search>
            </DockTools>
            <DockBody>
              <FilterColumn>
                <FilterHead>Filters<IconButton $w={14} aria-label="Collapse filters"><Chevrons /></IconButton></FilterHead>
                <Tree>
                  <TreeItem $depth={0}>
                    <Icon s={12}><rect width="20" height="20" fill="#f0f1f2" stroke="none" /><path d="M4 10h12" stroke="#5a5e68" strokeWidth="3" /></Icon>
                    <Icon s={16}>{darkTile}<g opacity="0.6">{fxGlyph}</g></Icon>
                    <Selected>All</Selected>
                  </TreeItem>
                  <TreeItem $depth={1}>
                    <Icon s={14}>{darkTile}<g opacity="0.7">{fxGlyph}</g></Icon>
                    All Used in Expressio
                  </TreeItem>
                </Tree>
                <TreeScroll><ScrollThumb /></TreeScroll>
                <InvertRow>
                  <CheckLabel><CheckBox type="checkbox" />Invert filter</CheckLabel>
                  <IconButton $w={14} aria-label="Collapse filter pane"><Chevrons /></IconButton>
                </InvertRow>
              </FilterColumn>
              <TablePane><ParametersTable /></TablePane>
            </DockBody>
            <DockStatus>All: 11 of 11 parameters displayed</DockStatus>
          </Dock>
          <DrawingColumn>
            <Canvas><CadDrawing /></Canvas>
            <CommandArea>
              <CommandGrip>
                <svg width="17" height="6" viewBox="0 0 17 6" stroke="#7f838c"><path d="M0 1h17M0 5h17" /></svg>
                <IconButton $w={20} $h={18} aria-label="Close command line"><Cross s={15} /></IconButton>
                <IconButton $w={20} $h={26} aria-label="Command settings"><Icon s={14}><path d="M3 17l3-7 7-7 4 4-7 7zM13 17l5-2" fill={LINE} /></Icon></IconButton>
              </CommandGrip>
              <CommandText>
                <History>{'Command:\nCommand: _qsave'}</History>
                <Prompt>
                  Command:
                  <PromptInput />
                  <PromptScroll><ScrollThumb $w="20px" /></PromptScroll>
                </Prompt>
              </CommandText>
            </CommandArea>
          </DrawingColumn>
        </Main>
        <StatusBar>
          <Group>
            <IconButton $w={24} aria-label="Layout list">
              <svg width="21" height="16" viewBox="0 0 21 16" stroke={LINE} strokeWidth="2"><path d="M0 2h21M0 8h21M0 14h21" /></svg>
            </IconButton>
            <ToolSpacer $w={12} />
            <LayoutTab $active>Model</LayoutTab>
            <LayoutTab>Layout1</LayoutTab>
            <Divider />
            <LayoutTab>Layout2</LayoutTab>
            <Divider />
            <IconButton $w={42} aria-label="New layout"><Icon s={18}><path d="M10 0v20M0 10h20" strokeWidth="2" /></Icon></IconButton>
          </Group>
          <StatusGroup>
            <Coordinates>2414.2281, 1836.3740, 0.0000</Coordinates>
            <ToggleStrip>
              {statusTools.map(([name, on, glyph]) => (
                <StatusToggle key={name} $on={on} aria-label={name}><Icon s={17}>{glyph}</Icon></StatusToggle>
              ))}
            </ToggleStrip>
            <StatusToggle $w={34}>1:1 <Caret /></StatusToggle>
            {statusMore.map(([name, glyph]) => (
              <StatusToggle key={name} aria-label={name}><Icon s={17}>{glyph}</Icon></StatusToggle>
            ))}
            <ToolSpacer $w={49} />
            {statusEnd.map(([name, glyph]) => (
              <StatusToggle key={name} $w={20} aria-label={name}><Icon s={17}>{glyph}</Icon></StatusToggle>
            ))}
            <ToolSpacer $w={2} />
            <span>GstarCAD</span>
          </StatusGroup>
        </StatusBar>
      </Window>
    </Page>
  );
}
